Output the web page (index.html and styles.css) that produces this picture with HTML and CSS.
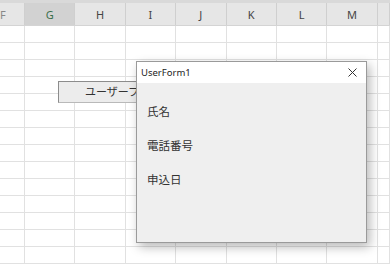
FILE: index.html
```html
<!DOCTYPE html>
<html lang="ja">
<head>
    <meta charset="UTF-8">
    <title>UserForm1</title>
    <link rel="stylesheet" href="styles.css">
</head>
<body>
    <div class="sheet">
        <div class="col-headers">
            <div class="col-head first">F</div>
            <div class="col-head selected">G</div>
            <div class="col-head">H</div>
            <div class="col-head">I</div>
            <div class="col-head">J</div>
            <div class="col-head">K</div>
            <div class="col-head">L</div>
            <div class="col-head">M</div>
            <div class="col-head last"></div>
        </div>
        <div class="cells" id="cells"></div>

        <div class="sheet-button">ユーザーフォーム</div>

        <div class="userform">
            <div class="title-bar">
                <span class="title">UserForm1</span>
                <svg class="close" width="9" height="9" viewBox="0 0 9 9">
                    <path d="M0.5 0.5 L8.5 8.5 M8.5 0.5 L0.5 8.5" stroke="#333" stroke-width="1" fill="none"/>
                </svg>
            </div>
            <div class="form-body">
                <div class="field">氏名</div>
                <div class="field">電話番号</div>
                <div class="field">申込日</div>
            </div>
        </div>
    </div>
    <script>
        const cells = document.getElementById('cells');
        for (let r = 0; r < 14; r++) {
            for (let c = 0; c < 9; c++) {
                const cell = document.createElement('div');
                cell.classList.add('cell');
                cells.appendChild(cell);
            }
        }
    </script>
</body>
</html>
```

FILE: styles.css
```css
body {
    margin: 0;
    padding: 0;
    background-color: white;
    font-family: "Noto Sans", "Noto Sans CJK JP", sans-serif;
    overflow: hidden;
}
.sheet {
    position: relative;
    box-sizing: border-box;
    width: 390px;
    height: 265px;
    padding-top: 3px;
    overflow: hidden;
    background: linear-gradient(#d9d9d9, #d9d9d9) top / 100% 3px no-repeat, white;
}
.col-headers,
.cells {
    display: grid;
    grid-template-columns: 25px repeat(7, 50.4px) 1fr;
}
.col-headers {
    height: 22px;
    background-color: #e6e6e6;
    border-bottom: 1px solid #d4d4d4;
}
.col-head {
    display: flex;
    align-items: center;
    justify-content: center;
    font-size: 11px;
    color: #444;
    border-right: 1px solid #cfcfcf;
}
.col-head.first {
    justify-content: flex-start;
    color: #888;
}
.col-head.selected {
    background-color: #d2d2d2;
    color: #3a6e4a;
}
.cell {
    height: 16px;
    border-right: 1px solid #e1e1e1;
    border-bottom: 1px solid #e1e1e1;
}
.sheet-button {
    position: absolute;
    left: 58px;
    top: 81px;
    width: 140px;
    height: 22px;
    box-sizing: border-box;
    padding-left: 26px;
    background-color: #ececec;
    border: 1px solid #b9b9b9;
    border-top-color: #8c8c8c;
    border-left-color: #8c8c8c;
    font-size: 11px;
    line-height: 20px;
    color: #333;
    white-space: nowrap;
}
.userform {
    position: absolute;
    left: 136px;
    top: 61px;
    width: 231px;
    height: 182px;
    box-sizing: border-box;
    border: 1px solid #9a9a9a;
    background-color: #efefef;
    box-shadow: 3px 4px 10px rgba(0, 0, 0, 0.28);
}
.title-bar {
    display: flex;
    justify-content: space-between;
    align-items: center;
    height: 21px;
    padding: 0 9px 0 4px;
    background-color: white;
}
.title {
    font-size: 9.5px;
    color: #222;
}
.close {
    display: block;
}
.form-body {
    display: flex;
    flex-direction: column;
    gap: 18px;
    padding: 21px 0 0 10px;
}
.field {
    font-size: 11.5px;
    line-height: 16px;
    color: #333;
}
```
